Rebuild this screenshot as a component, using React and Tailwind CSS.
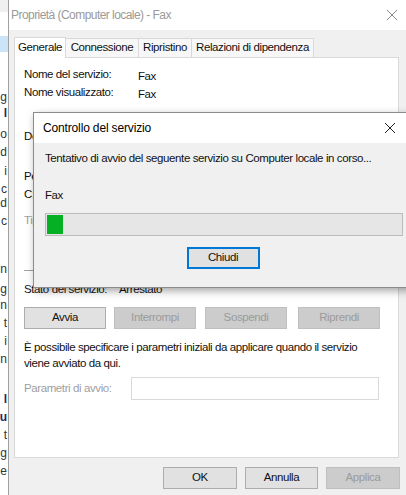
import React from 'react';

const font = { fontFamily: '"Liberation Sans", Arial, sans-serif' };

// right edges of a list behind the dialog
const behindRows = [
  { y: 90, t: 'g' }, { y: 106, t: 'l', dark: true }, { y: 127, t: 'o' }, { y: 145, t: 'd' },
  { y: 164, t: 'i' }, { y: 182, t: 'c' }, { y: 196, t: 'd' }, { y: 214, t: 'c' },
  { y: 262, t: 'n' }, { y: 282, t: 'g' }, { y: 298, t: 'n' }, { y: 316, t: 't' },
  { y: 334, t: 'i' }, { y: 352, t: 'n' }, { y: 392, t: 'l', dark: true }, { y: 410, t: 'u', dark: true },
  { y: 428, t: 't' }, { y: 446, t: 'g' }, { y: 464, t: 'e' },
];

function Btn({ children, disabled, className = '' }) {
  return (
    <div
      className={`h-[22px] flex items-center justify-center border ${
        disabled ? 'bg-[#cccccc] border-[#bfbfbf] text-[#9b9b9b]' : 'bg-[#e1e1e1] border-[#adadad] text-[#111]'
      } ${className}`}
    >
      {children}
    </div>
  );
}

function CloseX({ color }) {
  return (
    <svg width="12" height="12" viewBox="0 0 12 12">
      <path d="M1 1 L11 11 M11 1 L1 11" stroke={color} strokeWidth="1" />
    </svg>
  );
}

export default function App() {
  return (
    <div
      className="relative w-[406px] h-[495px] overflow-hidden flex bg-[#f0f0f0] text-[#111] text-[11.5px] tracking-[-0.4px]"
      style={font}
    >
      {/* window behind */}
      <div className="relative w-[9px] h-full bg-white border-r border-[#a0a0a0] overflow-hidden tracking-normal">
        <div className="h-[12px] bg-[#f0f0f0]" />
        <div className="absolute left-0 top-[36px] w-full h-[16px] bg-[#cce4f7]" />
        {behindRows.map((r) => (
          <div
            key={r.y}
            className={`absolute right-[1px] text-[12px] leading-[14px] ${r.dark ? 'text-[#1a2a66] font-bold' : 'text-[#333]'}`}
            style={{ top: r.y }}
          >
            {r.t}
          </div>
        ))}
      </div>

      {/* properties window */}
      <div className="flex-1 flex flex-col">
        <div className="h-[30px] bg-white flex items-center justify-between pl-[2px] pr-[8px]">
          <span className="text-[12px] tracking-[-0.55px] text-[#9a9a9a]">Proprietà (Computer locale) - Fax</span>
          <CloseX color="#8a8a8a" />
        </div>

        <div className="px-[5px] pt-[7px]">
          <div className="flex items-end h-[20px]">
            <div className="w-[52px] h-[21px] -mb-px flex items-center justify-center bg-white border border-b-0 border-[#d9d9d9] relative z-10">
              Generale
            </div>
            <div className="w-[73px] h-[19px] flex items-center justify-center bg-[#f7f7f7] border border-l-0 border-b-0 border-[#d9d9d9]">Connessione</div>
            <div className="w-[53px] h-[19px] flex items-center justify-center bg-[#f7f7f7] border border-l-0 border-b-0 border-[#d9d9d9]">Ripristino</div>
            <div className="w-[122px] h-[19px] flex items-center justify-center bg-[#f7f7f7] border border-l-0 border-b-0 border-[#d9d9d9]">Relazioni di dipendenza</div>
          </div>

          <div className="h-[401px] w-[385px] bg-white border border-[#d9d9d9] px-[9px] pt-[8px]">
            <div className="flex h-[18px] items-center">
              <span className="w-[114px]">Nome del servizio:</span>
              <span className="mt-[3px]">Fax</span>
            </div>
            <div className="flex h-[18px] items-center">
              <span className="w-[114px]">Nome visualizzato:</span>
              <span className="mt-[3px]">Fax</span>
            </div>
            <div className="mt-[26px] h-[18px] flex items-center">Descrizione:</div>
            <div className="mt-[22px] h-[18px] flex items-center">Percorso eseguibile:</div>
            <div className="h-[18px] flex items-center">C:\Windows\system32\fxssvc.exe</div>
            <div className="mt-[8px] h-[18px] flex items-center text-[#a0a0a0]">Tipo di avvio:</div>
            <div className="mt-[40px] h-px bg-[#a0a0a0]" />
            <div className="mt-[10px] flex h-[18px] items-center">
              <span className="w-[95px]">Stato del servizio:</span>
              <span>Arrestato</span>
            </div>
            <div className="mt-[8px] flex gap-[8px]">
              <Btn className="w-[82px]">Avvia</Btn>
              <Btn disabled className="w-[82px]">Interrompi</Btn>
              <Btn disabled className="w-[82px] ml-[1px]">Sospendi</Btn>
              <Btn disabled className="w-[82px] ml-[3px]">Riprendi</Btn>
            </div>
            <div className="mt-[10px] leading-[16px]">
              È possibile specificare i parametri iniziali da applicare quando il servizio
              <br />
              viene avviato da qui.
            </div>
            <div className="mt-[6px] flex items-center">
              <span className="w-[107px] text-[#a0a0a0]">Parametri di avvio:</span>
              <div className="w-[248px] h-[23px] border border-[#d9d9d9] bg-white" />
            </div>
          </div>

          <div className="mt-[9px] flex justify-end gap-[8px] pr-[1px]">
            <Btn className="w-[74px]">OK</Btn>
            <Btn className="w-[73px]">Annulla</Btn>
            <Btn disabled className="w-[74px]">Applica</Btn>
          </div>
        </div>
      </div>

      {/* service control dialog */}
      <div className="absolute left-[33px] top-[112px] w-[382px] h-[176px] border border-[#8c8c8c] bg-[#f0f0f0] shadow-[2px_3px_8px_rgba(0,0,0,0.35)] flex flex-col">
        <div className="h-[30px] bg-white flex items-center justify-between pl-[9px] pr-[18px]">
          <span className="text-[12px] tracking-[-0.15px] text-black">Controllo del servizio</span>
          <CloseX color="#222" />
        </div>
        <div className="px-[11px]">
          <div className="mt-[7px] h-[18px] flex items-center">
            Tentativo di avvio del seguente servizio su Computer locale in corso...
          </div>
          <div className="mt-[19px] h-[18px] flex items-center">Fax</div>
          <div className="mt-[8px] w-[358px] h-[23px] border border-[#bcbcbc] bg-[#e6e6e6] p-px">
            <div className="w-[16px] h-full bg-[#06b025]" />
          </div>
          <div className="mt-[11px] flex justify-center pr-[2px]">
            <div className="w-[73px] h-[22px] border-2 border-[#0078d7] bg-[#e1e1e1] flex items-center justify-center">
              Chiudi
            </div>
          </div>
        </div>
      </div>
    </div>
  );
}
